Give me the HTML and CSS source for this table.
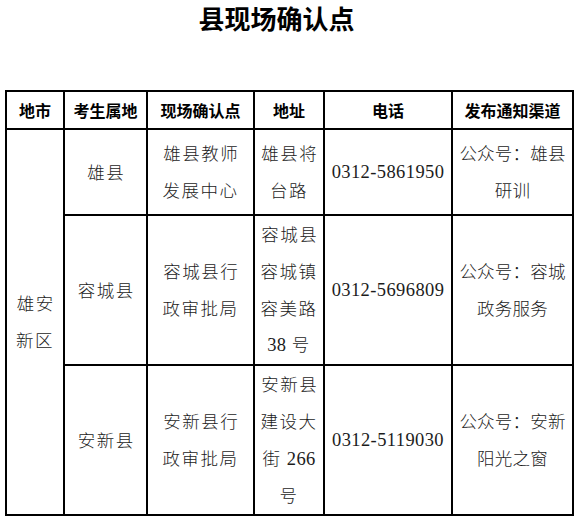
FILE: index.html
```html
<!DOCTYPE html>
<html lang="zh-CN">
<head>
<meta charset="utf-8">
<title>县现场确认点</title>
<link rel="stylesheet" href="styles.css">
</head>
<body>
<h1 class="title">县现场确认点</h1>
<table class="grid">
  <colgroup>
    <col class="c1"><col class="c2"><col class="c3"><col class="c4"><col class="c5"><col class="c6">
  </colgroup>
  <thead>
    <tr class="head">
      <th>地市</th><th>考生属地</th><th>现场确认点</th><th>地址</th><th>电话</th><th>发布通知渠道</th>
    </tr>
  </thead>
  <tbody>
    <tr class="r1">
      <td rowspan="3" class="cj">雄安<br>新区</td>
      <td class="cj">雄县</td>
      <td class="cj">雄县教师<br>发展中心</td>
      <td class="cj">雄县将<br>台路</td>
      <td class="num">0312-5861950</td>
      <td class="cj ch">公众号：雄县<br>研训</td>
    </tr>
    <tr class="r2">
      <td class="cj">容城县</td>
      <td class="cj">容城县行<br>政审批局</td>
      <td class="cj">容城县<br>容城镇<br>容美路<br><span class="d">38</span> 号</td>
      <td class="num">0312-5696809</td>
      <td class="cj ch">公众号：容城<br>政务服务</td>
    </tr>
    <tr class="r3">
      <td class="cj">安新县</td>
      <td class="cj">安新县行<br>政审批局</td>
      <td class="cj">安新县<br>建设大<br>街 <span class="d">266</span><br>号</td>
      <td class="num">0312-5119030</td>
      <td class="cj ch">公众号：安新<br>阳光之窗</td>
    </tr>
  </tbody>
</table>
</body>
</html>
```
FILE: styles.css
```css
html, body {
  margin: 0;
  padding: 0;
  background: #fff;
}
body {
  width: 578px;
  height: 521px;
  overflow: hidden;
  font-family: "Noto Sans CJK SC", "Liberation Serif", serif;
  color: #1c1c1c;
}
.title {
  margin: 0;
  padding: 0 25px 0 0;
  font-size: 26px;
  line-height: 35px;
  font-weight: 700;
  text-align: center;
  color: #000;
}
.grid {
  margin: 55px 0 0 5px;
  border-collapse: collapse;
  table-layout: fixed;
  width: 569px;
}
.c1 { width: 58px; }
.c2 { width: 83px; }
.c3 { width: 107px; }
.c4 { width: 70px; }
.c5 { width: 128px; }
.c6 { width: 121px; }
.grid th,
.grid td {
  border: 2px solid #000;
  padding: 0;
  text-align: center;
  vertical-align: middle;
}
.grid th {
  height: 36px;
  font-size: 16px;
  font-weight: 700;
  color: #000;
  line-height: 20px;
}
.r1 td { height: 84px; }
.r2 td { height: 147px; }
.r3 td { height: 147.5px; }
.cj {
  font-size: 17.5px;
  line-height: 36.75px;
  letter-spacing: 1.5px;
  text-indent: 1.5px;
  font-weight: 300;
}
.ch {
  letter-spacing: 0.2px;
  text-indent: 0;
}
.num,
.d {
  font-family: "Liberation Serif", serif;
  font-size: 18.5px;
  letter-spacing: 0.4px;
}
.d {
  letter-spacing: 0.3px;
}
```
